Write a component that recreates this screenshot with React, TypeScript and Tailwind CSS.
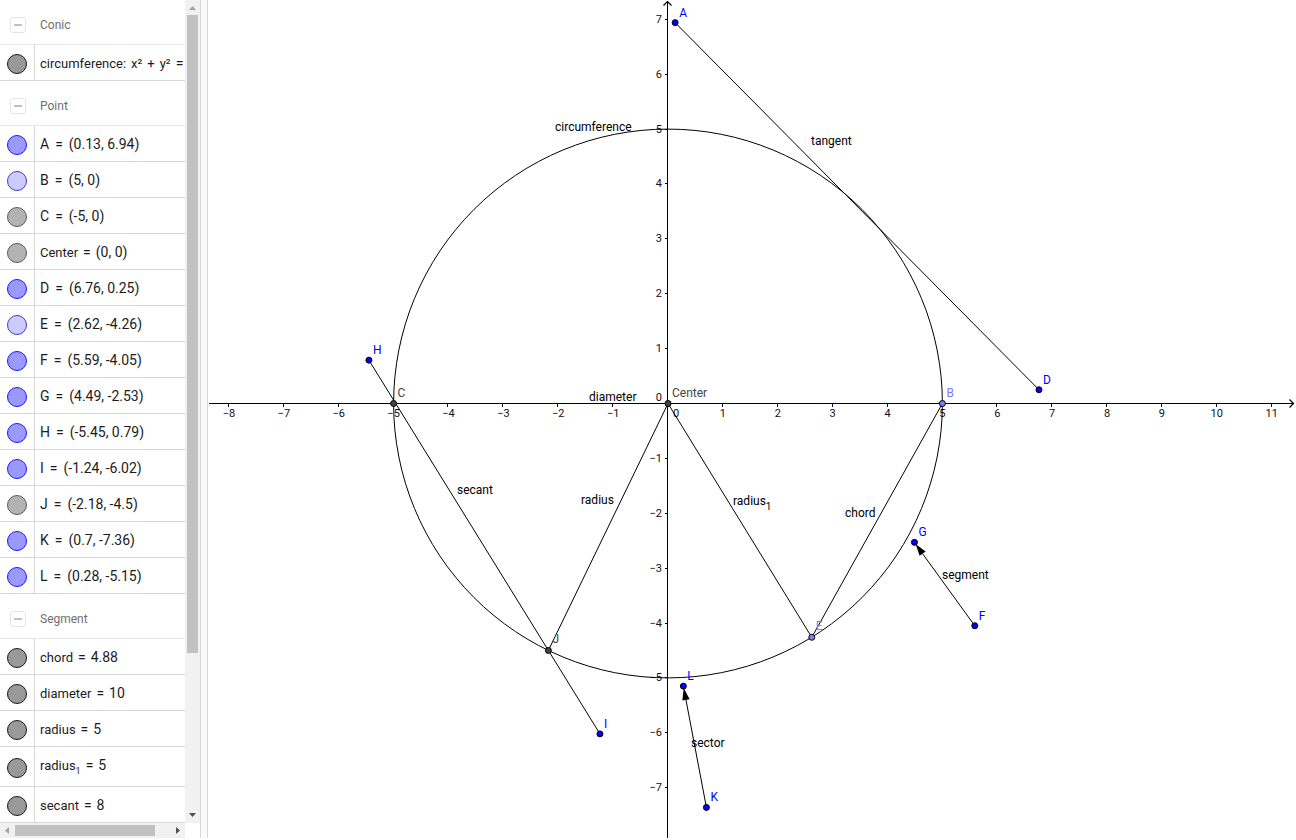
import React, { useState } from "react";

type Tone = "blue" | "pale" | "gray" | "dark";

type Item = { name: string; sub?: string; expr?: string[]; value: string; tone: Tone };
type Group = { title: string; items: Item[] };

const groups: Group[] = [
  { title: "Conic", items: [{ name: "circumference:", expr: ["x²", "+", "y²"], value: "", tone: "dark" }] },
  {
    title: "Point",
    items: [
      { name: "A", value: "(0.13, 6.94)", tone: "blue" },
      { name: "B", value: "(5, 0)", tone: "pale" },
      { name: "C", value: "(-5, 0)", tone: "gray" },
      { name: "Center", value: "(0, 0)", tone: "gray" },
      { name: "D", value: "(6.76, 0.25)", tone: "blue" },
      { name: "E", value: "(2.62, -4.26)", tone: "pale" },
      { name: "F", value: "(5.59, -4.05)", tone: "blue" },
      { name: "G", value: "(4.49, -2.53)", tone: "blue" },
      { name: "H", value: "(-5.45, 0.79)", tone: "blue" },
      { name: "I", value: "(-1.24, -6.02)", tone: "blue" },
      { name: "J", value: "(-2.18, -4.5)", tone: "gray" },
      { name: "K", value: "(0.7, -7.36)", tone: "blue" },
      { name: "L", value: "(0.28, -5.15)", tone: "blue" },
    ],
  },
  {
    title: "Segment",
    items: [
      { name: "chord", value: "4.88", tone: "dark" },
      { name: "diameter", value: "10", tone: "dark" },
      { name: "radius", value: "5", tone: "dark" },
      { name: "radius", sub: "1", value: "5", tone: "dark" },
      { name: "secant", value: "8", tone: "dark" },
    ],
  },
];

const marble: Record<Tone, string> = {
  blue: "border-[#1a1aff] bg-[#9999ff]",
  pale: "border-[#3d3db8] bg-[#cbcbff]",
  gray: "border-[#5a5a5a] bg-[#b3b3b3]",
  dark: "border-[#1a1a1a] bg-[#999999]",
};

function Row({ item }: { item: Item }) {
  const [visible, setVisible] = useState(true);
  return (
    <li className={`flex border-b border-[#d8d8d8] ${item.sub ? "h-10" : "h-9"}`}>
      <div className="flex w-[35px] shrink-0 items-center border-r border-[#d8d8d8] pt-0.5 pl-[7px]">
        <button
          type="button"
          aria-label={`Show ${item.name}${item.sub ?? ""}`}
          aria-pressed={visible}
          onClick={() => setVisible(!visible)}
          className={`size-5 rounded-full border ${visible ? marble[item.tone] : "border-[#999999] bg-white"}`}
        />
      </div>
      <div
        className={`flex items-center pl-[5px] text-sm whitespace-pre text-[#1c1c1c] ${item.sub ? "pb-0.5" : "pt-px"}`}
      >
        <span>
          <span className={item.name.length > 1 ? "text-[13px]" : "text-sm"}>{item.name}</span>
          {item.sub && <sub className="-bottom-1 text-[9px]">{item.sub}</sub>}
          {item.expr?.map((part) => (
            <span key={part} className="ml-[5px] text-[13px]">
              {part}
            </span>
          ))}
          <span className={item.name.length > 1 ? "mx-[5px]" : "mx-1.5"}>=</span>
          {item.value}
        </span>
      </div>
    </li>
  );
}

function Section({ group }: { group: Group }) {
  const [open, setOpen] = useState(true);
  return (
    <section>
      <h2 className="flex h-[45px] items-center border-b border-[#e8e8e8] pt-1.5 pl-2.5 text-xs text-[#6e6e6e]">
        <button
          type="button"
          aria-label={`Toggle ${group.title}`}
          aria-expanded={open}
          onClick={() => setOpen(!open)}
          className="mr-3.5 flex size-4 items-center justify-center rounded-[3px] border border-[#e6e6e6]"
        >
          <span className="h-0.5 w-2 bg-[#c0c0c0]" />
        </button>
        {group.title}
      </h2>
      {open && (
        <ul>
          {group.items.map((item) => (
            <Row key={item.name + (item.sub ?? "")} item={item} />
          ))}
        </ul>
      )}
    </section>
  );
}

function Arrow({ d, color }: { d: string; color: string }) {
  return (
    <svg width="15" height="15" className="shrink-0" aria-hidden="true">
      <path d={d} fill={color} />
    </svg>
  );
}

function Sidebar() {
  return (
    <aside className="flex w-[201px] shrink-0 flex-col border-r border-[#d8d8d8]">
      <div className="flex min-h-0 flex-1">
        <div className="min-w-0 flex-1 overflow-hidden">
          {groups.map((group) => (
            <Section key={group.title} group={group} />
          ))}
        </div>
        <div className="flex w-[15px] flex-col items-center bg-[#f1f1f1]">
          <Arrow d="M4 10 L7.5 6 L11 10 Z" color="#a3a3a3" />
          <div className="w-[11px] grow-[638] bg-[#c1c1c1]" />
          <div className="grow-[155]" />
          <Arrow d="M4 5 L11 5 L7.5 9 Z" color="#505050" />
        </div>
      </div>
      <div className="mr-[15px] flex h-[15px] items-center bg-[#f1f1f1]">
        <Arrow d="M9 4 L5 7.5 L9 11 Z" color="#a3a3a3" />
        <div className="h-[11px] w-[140px] bg-[#c1c1c1]" />
        <div className="flex-1" />
        <Arrow d="M6 4 L10 7.5 L6 11 Z" color="#505050" />
      </div>
    </aside>
  );
}

const UNIT = 54.88;

type PointData = { id: string; x: number; y: number; color: string };

const BLUE = "#0000ff";
const PALE = "#7d7dff";
const GRAY = "#444444";

const points: PointData[] = [
  { id: "A", x: 0.13, y: 6.94, color: BLUE },
  { id: "B", x: 5, y: 0, color: PALE },
  { id: "C", x: -5, y: 0, color: GRAY },
  { id: "Center", x: 0, y: 0, color: GRAY },
  { id: "D", x: 6.76, y: 0.25, color: BLUE },
  { id: "E", x: 2.62, y: -4.26, color: PALE },
  { id: "F", x: 5.59, y: -4.05, color: BLUE },
  { id: "G", x: 4.49, y: -2.53, color: BLUE },
  { id: "H", x: -5.45, y: 0.79, color: BLUE },
  { id: "I", x: -1.24, y: -6.02, color: BLUE },
  { id: "J", x: -2.18, y: -4.5, color: GRAY },
  { id: "K", x: 0.7, y: -7.36, color: BLUE },
  { id: "L", x: 0.28, y: -5.15, color: BLUE },
];

const at = (id: string) => {
  const p = points.find((q) => q.id === id)!;
  return { x: p.x * UNIT, y: -p.y * UNIT };
};

const segments = [
  ["A", "D"],
  ["H", "I"],
  ["Center", "J"],
  ["Center", "E"],
  ["B", "E"],
];

const vectors = [
  ["F", "G"],
  ["K", "L"],
];

const captions = [
  { text: "circumference", x: -113, y: -273 },
  { text: "tangent", x: 143, y: -259 },
  { text: "diameter", x: -79, y: -3 },
  { text: "secant", x: -211, y: 90 },
  { text: "radius", x: -87, y: 100 },
  { text: "radius", sub: "1", x: 65, y: 101 },
  { text: "chord", x: 177, y: 113 },
  { text: "segment", x: 274, y: 175 },
  { text: "sector", x: 23, y: 343 },
];

const label = (n: number) => (n < 0 ? `−${-n}` : `${n}`);
const xTicks = Array.from({ length: 20 }, (_, i) => i - 8);
const yTicks = Array.from({ length: 15 }, (_, i) => i - 7);

function Vector({ from, to }: { from: string; to: string }) {
  const a = at(from);
  const b = at(to);
  const len = Math.hypot(b.x - a.x, b.y - a.y);
  const ux = (b.x - a.x) / len;
  const uy = (b.y - a.y) / len;
  const tip = { x: b.x - ux * 2, y: b.y - uy * 2 };
  const base = { x: b.x - ux * 14, y: b.y - uy * 14 };
  const wing = 3.7;
  return (
    <g>
      <line x1={a.x} y1={a.y} x2={base.x} y2={base.y} stroke="#000" />
      <path
        d={`M${tip.x} ${tip.y} L${base.x - uy * wing} ${base.y + ux * wing} L${base.x + uy * wing} ${base.y - ux * wing} Z`}
        fill="#000"
      />
    </g>
  );
}

function Graph() {
  return (
    <main className="min-w-0 flex-1">
      <svg className="block h-full w-full" role="img" aria-label="Circle construction">
        <g transform="translate(459.5 403.5)">
          <g stroke="#000" strokeWidth="1" shapeRendering="crispEdges">
            <line x1="-459" y1="0" x2="626" y2="0" />
            <line x1="0" y1="-402" x2="0" y2="435" />
            {xTicks.map((n) => (
              <line key={n} x1={Math.round(n * UNIT)} x2={Math.round(n * UNIT)} y1="0" y2="3" />
            ))}
            {yTicks.map((n) => (
              <line key={n} x1="-3" x2="0" y1={Math.round(-n * UNIT)} y2={Math.round(-n * UNIT)} />
            ))}
          </g>
          <path d="M622 -4 L626 0 L622 4 M-4 -398 L0 -402 L4 -398" fill="none" stroke="#000" strokeWidth="1.2" />
        </g>
        <g transform="translate(460 403)" fontSize="11" fill="#111">
          {xTicks.map((n) => (
            <text key={n} x={n * UNIT + (n === 0 ? 8 : 0)} y="14" textAnchor="middle">
              {label(n)}
            </text>
          ))}
          {yTicks.map((n) => (
            <text key={n} x="-6" y={n === 0 ? -2 : Math.floor(-n * UNIT + 0.5) + 4} textAnchor="end">
              {label(n)}
            </text>
          ))}
        </g>
        <g transform="translate(460 403.5)">
          <circle r={5 * UNIT} fill="none" stroke="#000" />
          {segments.map(([from, to]) => (
            <line key={from + to} x1={at(from).x} y1={at(from).y} x2={at(to).x} y2={at(to).y} stroke="#000" />
          ))}
          {vectors.map(([from, to]) => (
            <Vector key={from + to} from={from} to={to} />
          ))}
          <g fontSize="12">
            {captions.map((c) => (
              <text key={c.text + (c.sub ?? "")} x={c.x} y={c.y} fill="#000">
                {c.text}
                {c.sub && (
                  <tspan fontSize="10" dy="5">
                    {c.sub}
                  </tspan>
                )}
              </text>
            ))}
            {points.map((p) => (
              <g key={p.id}>
                <circle cx={p.x * UNIT} cy={-p.y * UNIT} r="3" fill={p.color} stroke="#000" />
                <text x={p.x * UNIT + 4} y={Math.floor(-p.y * UNIT) - (p.color === BLUE ? 6 : 7)} fill={p.color}>
                  {p.id}
                </text>
              </g>
            ))}
          </g>
        </g>
      </svg>
    </main>
  );
}

export default function App() {
  return (
    <div className="h-screen bg-white pb-0.5 font-[Roboto,sans-serif] antialiased">
      <div className="flex h-full">
        <Sidebar />
        <div className="w-[7px] shrink-0 border-r border-[#d8d8d8] bg-[#fafafa]" />
        <Graph />
      </div>
    </div>
  );
}
